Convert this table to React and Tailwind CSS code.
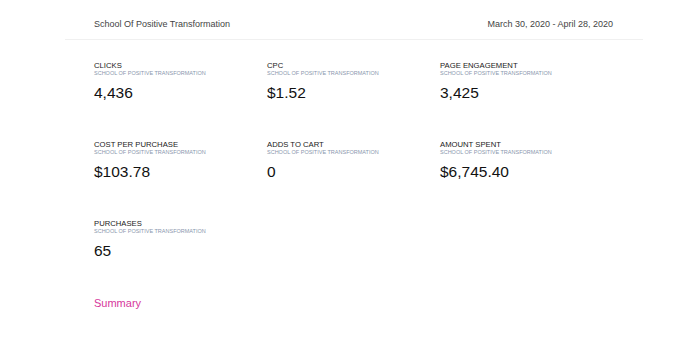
import React from "react";

const metrics = [
  { label: "CLICKS", value: "4,436" },
  { label: "CPC", value: "$1.52" },
  { label: "PAGE ENGAGEMENT", value: "3,425" },
  { label: "COST PER PURCHASE", value: "$103.78" },
  { label: "ADDS TO CART", value: "0" },
  { label: "AMOUNT SPENT", value: "$6,745.40" },
  { label: "PURCHASES", value: "65" },
];

const Metric = ({ label, value }) => (
  <div className="h-[79px]">
    <div className="text-[7.7px] leading-[9px] text-[#1a1a1a]">{label}</div>
    <div className="text-[5.5px] leading-[7px] text-[#8a97ad]">
      SCHOOL OF POSITIVE TRANSFORMATION
    </div>
    <div className="mt-[7px] text-[15.5px] leading-[18px] text-[#111]">{value}</div>
  </div>
);

export default function App() {
  return (
    <div
      className="w-[688px] h-[350px] bg-white pl-[65px] pr-[45px]"
      style={{ fontFamily: '"Liberation Sans", Arial, sans-serif' }}
    >
      <div className="flex h-[40px] items-center justify-between border-b border-[#f0f0f0] pl-[29px] pr-[30px] pt-[11px] text-[9px] text-[#444]">
        <span>School Of Positive Transformation</span>
        <span>March 30, 2020 - April 28, 2020</span>
      </div>

      {/* metrics grid */}
      <div className="grid grid-cols-[173px_173px_173px] pl-[29px] pt-[21px]">
        {metrics.map((m) => (
          <Metric key={m.label} label={m.label} value={m.value} />
        ))}
      </div>

      <div className="-mt-[3px] pl-[29px] text-[11px] text-[#d6379c]">Summary</div>
    </div>
  );
}
